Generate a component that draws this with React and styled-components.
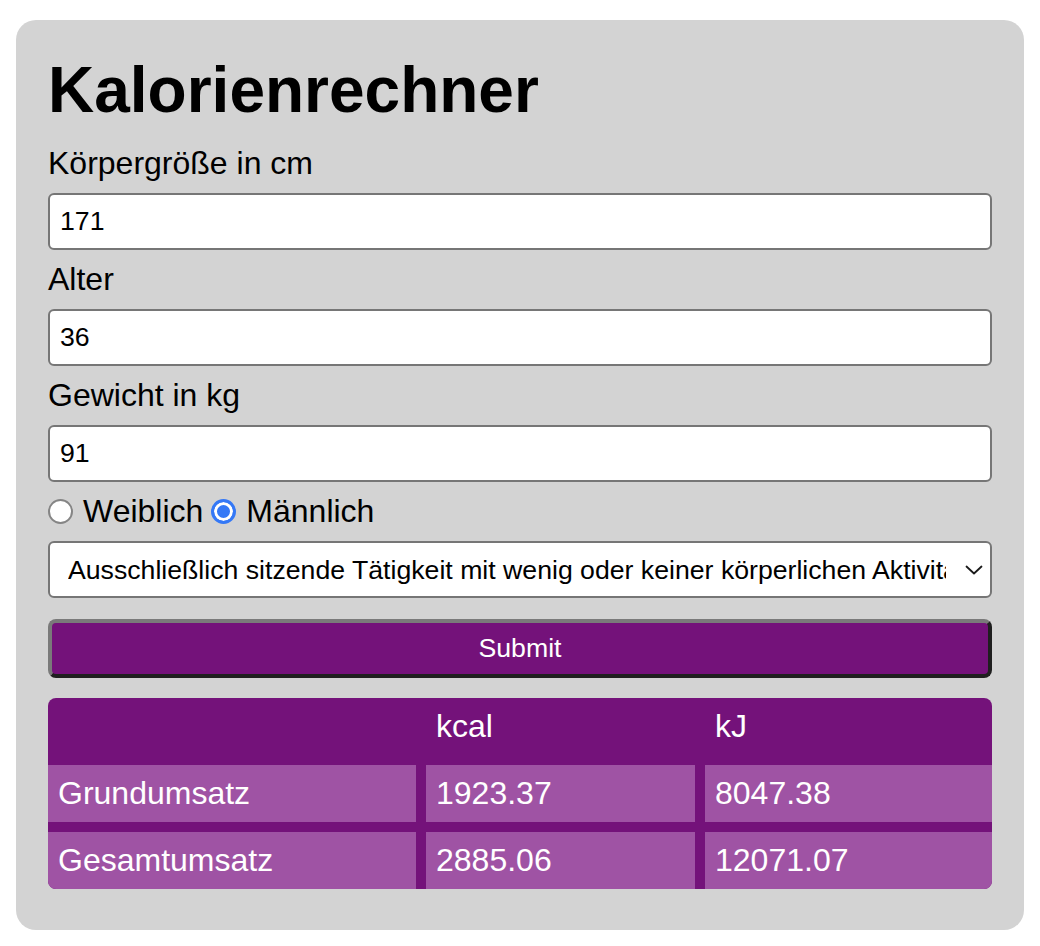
import React from "react";
import styled, { createGlobalStyle } from "styled-components";

const GlobalStyle = createGlobalStyle`
  html, body {
    margin: 0;
    padding: 0;
    background: #ffffff;
    font-family: "Liberation Sans", Arial, Helvetica, sans-serif;
    color: #000000;
  }
  * { box-sizing: border-box; }
`;

const Page = styled.div`
  padding: 20px 16px 16px;
`;

const Card = styled.main`
  background: #d3d3d3;
  border-radius: 20px;
  padding: 33px 32px 41px;
`;

const Title = styled.h1`
  margin: 0 0 18px;
  font-size: 64px;
  font-weight: 700;
  line-height: normal;
`;

const Form = styled.form`
  display: flex;
  flex-direction: column;
  gap: 11px;
`;

const FieldLabel = styled.label`
  display: block;
  font-size: 32px;
  line-height: normal;
`;

const TextInput = styled.input`
  display: block;
  width: 100%;
  height: 57px;
  margin: 0;
  padding: 0 10px;
  border: 2px solid #767676;
  border-radius: 6px;
  background: #ffffff;
  font-family: inherit;
  font-size: 26.67px;
  color: #000000;
  outline: none;
`;

const RadioRow = styled.div`
  display: flex;
  align-items: center;
  gap: 8px;
  font-size: 32px;
  line-height: normal;
`;

const RadioOption = styled.label`
  display: inline-flex;
  align-items: center;
`;

const Radio = styled.input`
  appearance: none;
  -webkit-appearance: none;
  width: 25px;
  height: 25px;
  margin: 0 10px 0 0;
  border-radius: 50%;
  border: 2px solid #858585;
  background: #ffffff;
  flex-shrink: 0;

  &:checked {
    border: 3px solid #3478f6;
    background: #3478f6;
    box-shadow: inset 0 0 0 3px #ffffff;
  }
`;

const SelectWrap = styled.div`
  position: relative;
`;

const Select = styled.select`
  appearance: none;
  -webkit-appearance: none;
  display: block;
  width: 100%;
  height: 57px;
  margin: 0;
  padding: 0 44px 0 18px;
  border: 2px solid #767676;
  border-radius: 6px;
  background: #ffffff;
  font-family: inherit;
  font-size: 26.67px;
  color: #000000;
  outline: none;
`;

const Chevron = styled.svg`
  position: absolute;
  right: 9px;
  top: 50%;
  width: 18px;
  height: 10px;
  transform: translateY(-50%);
  pointer-events: none;
`;

const SubmitButton = styled.button`
  margin-top: 10px;
  height: 59px;
  width: 100%;
  border-width: 4px;
  border-style: solid;
  border-color: #7a7a7a #1f1f1f #1f1f1f #7a7a7a;
  border-radius: 8px;
  background: #74127a;
  color: #ffffff;
  font-family: inherit;
  font-size: 26.67px;
  cursor: pointer;
`;

const ResultTable = styled.div`
  margin-top: 20px;
  display: grid;
  grid-template-columns: 368px 269px 1fr;
  grid-auto-rows: 57px;
  gap: 10px;
  background: #74127a;
  border-radius: 8px;
  overflow: hidden;
`;

const Cell = styled.div`
  display: flex;
  align-items: center;
  padding: 0 10px;
  font-size: 32px;
  color: #ffffff;
  background: ${(p) => (p.$head ? "transparent" : "#9f53a4")};
  white-space: nowrap;
`;

const results = [
  { label: "Grundumsatz", kcal: "1923.37", kj: "8047.38" },
  { label: "Gesamtumsatz", kcal: "2885.06", kj: "12071.07" },
];

export default function App() {
  return (
    <>
      <GlobalStyle />
      <Page>
        <Card>
          <Title>Kalorienrechner</Title>
          <Form onSubmit={(e) => e.preventDefault()}>
            <FieldLabel htmlFor="groesse">Körpergröße in cm</FieldLabel>
            <TextInput id="groesse" type="text" inputMode="numeric" defaultValue="171" />
            <FieldLabel htmlFor="alter">Alter</FieldLabel>
            <TextInput id="alter" type="text" inputMode="numeric" defaultValue="36" />
            <FieldLabel htmlFor="gewicht">Gewicht in kg</FieldLabel>
            <TextInput id="gewicht" type="text" inputMode="numeric" defaultValue="91" />
            <RadioRow>
              <RadioOption>
                <Radio type="radio" name="geschlecht" value="w" />
                Weiblich
              </RadioOption>
              <RadioOption>
                <Radio type="radio" name="geschlecht" value="m" defaultChecked />
                Männlich
              </RadioOption>
            </RadioRow>
            <SelectWrap>
              <Select defaultValue="1.2">
                <option value="1.2">Ausschließlich sitzende Tätigkeit mit wenig oder keiner körperlichen Aktivität</option>
                <option value="1.45">Sitzende Tätigkeit, zeitweilig gehende oder stehende Tätigkeit</option>
                <option value="1.65">Überwiegend gehende oder stehende Arbeit</option>
                <option value="1.85">Körperlich anstrengende berufliche Arbeit</option>
              </Select>
              <Chevron viewBox="0 0 18 10" fill="none">
                <path d="M1.5 1.5 L9 8.5 L16.5 1.5" stroke="#1a1a1a" strokeWidth="1.8" strokeLinecap="round" strokeLinejoin="round" />
              </Chevron>
            </SelectWrap>
            <SubmitButton type="submit">Submit</SubmitButton>
          </Form>
          <ResultTable>
            <Cell $head />
            <Cell $head>kcal</Cell>
            <Cell $head>kJ</Cell>
            {results.map((r) => (
              <React.Fragment key={r.label}>
                <Cell>{r.label}</Cell>
                <Cell>{r.kcal}</Cell>
                <Cell>{r.kj}</Cell>
              </React.Fragment>
            ))}
          </ResultTable>
        </Card>
      </Page>
    </>
  );
}
